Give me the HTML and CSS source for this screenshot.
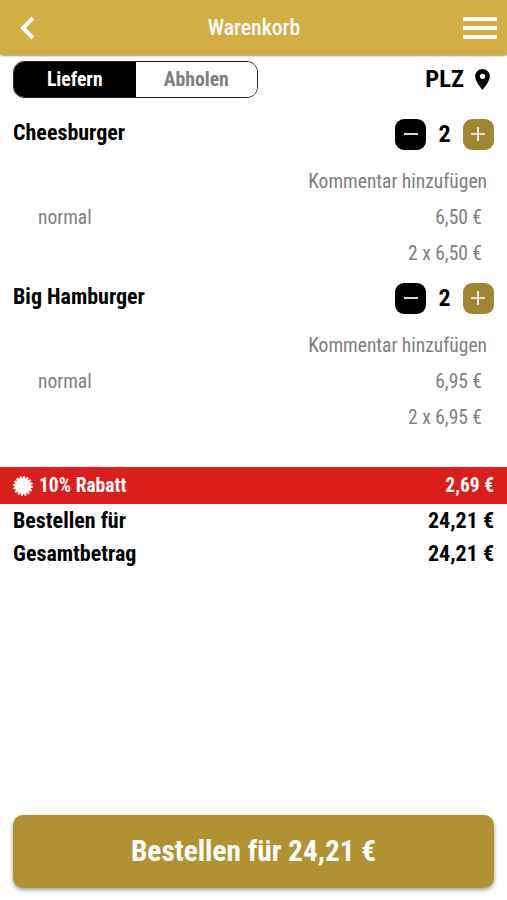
FILE: index.html
```html
<!DOCTYPE html>
<html lang="de">
<head>
  <meta charset="UTF-8" />
  <meta name="viewport" content="width=device-width, initial-scale=1" />
  <title>Warenkorb</title>
  <link rel="stylesheet" href="styles.css">
</head>
<body>

  <header class="topbar">
    <svg class="back" viewBox="0 0 16 24"><path d="M13 2 3 12l10 10" /></svg>
    <h1>Warenkorb</h1>
    <svg class="menu" viewBox="0 0 34 22"><path d="M0 2h34M0 11h34M0 20h34" /></svg>
  </header>

  <div class="options">
    <div class="switch">
      <button class="active">Liefern</button>
      <button>Abholen</button>
    </div>
    <div class="plz">
      <span>PLZ</span>
      <svg class="pin" viewBox="5 2 14 20"><path d="M12 2C8.13 2 5 5.13 5 9c0 5.25 7 13 7 13s7-7.75 7-13c0-3.87-3.13-7-7-7zm0 9.5a2.5 2.5 0 0 1 0-5 2.5 2.5 0 0 1 0 5z" /></svg>
    </div>
  </div>

  <main class="cart">
    <section class="item">
      <div class="item-head">
        <h2>Cheesburger</h2>
        <div class="counter">
          <button class="minus"><svg viewBox="0 0 14 14"><path d="M0 7h14" /></svg></button>
          <span>2</span>
          <button class="plus"><svg viewBox="0 0 14 14"><path d="M0 7h14M7 0v14" /></svg></button>
        </div>
      </div>
      <p class="comment">Kommentar hinzufügen</p>
      <p class="line"><span>normal</span><span>6,50 €</span></p>
      <p class="line sum"><span>2 x 6,50 €</span></p>
    </section>

    <section class="item">
      <div class="item-head">
        <h2>Big Hamburger</h2>
        <div class="counter">
          <button class="minus"><svg viewBox="0 0 14 14"><path d="M0 7h14" /></svg></button>
          <span>2</span>
          <button class="plus"><svg viewBox="0 0 14 14"><path d="M0 7h14M7 0v14" /></svg></button>
        </div>
      </div>
      <p class="comment">Kommentar hinzufügen</p>
      <p class="line"><span>normal</span><span>6,95 €</span></p>
      <p class="line sum"><span>2 x 6,95 €</span></p>
    </section>
  </main>

  <div class="discount">
    <svg class="badge" viewBox="0 0 20 20">
      <circle cx="10" cy="10" r="8.3" />
      <circle class="teeth" cx="10" cy="10" r="8.5" pathLength="32" />
    </svg>
    <span class="name">10% Rabatt</span>
    <span>2,69 €</span>
  </div>

  <div class="totals">
    <p><span>Bestellen für</span><span>24,21 €</span></p>
    <p><span>Gesamtbetrag</span><span>24,21 €</span></p>
  </div>

  <button class="order">Bestellen für 24,21 €</button>

</body>
</html>
```
FILE: styles.css
```css
* {
  box-sizing: border-box;
}

body {
  display: flex;
  flex-direction: column;
  height: 900px;
  margin: 0;
  background: #fff;
  color: #000;
  font-family: "Roboto Condensed", Roboto, sans-serif;
  font-stretch: 75%;
}

h1, h2, p {
  margin: 0;
}

button {
  padding: 0;
  border: none;
  font: inherit;
}

.topbar {
  display: flex;
  align-items: center;
  justify-content: space-between;
  height: 55px;
  padding: 0 10px 0 20px;
  border-radius: 0 0 3px 3px;
  background: #d3ae45;
  color: #fff;
  box-shadow: 0 1px 2px rgba(0, 0, 0, 0.4);
}

.topbar h1 {
  padding-left: 9px;
  font-size: 21.7px;
  font-weight: 500;
}

.topbar svg {
  fill: none;
  stroke: #fff;
}

.back {
  width: 16px;
  height: 24px;
  stroke-width: 4;
}

.menu {
  width: 34px;
  height: 22px;
  stroke-width: 4;
}

.options {
  display: flex;
  align-items: center;
  justify-content: space-between;
  padding: 6px 17px 0 13px;
}

.switch {
  display: flex;
  width: 245px;
  height: 37px;
  border: 1px solid #222;
  border-radius: 11px;
  overflow: hidden;
}

.switch button {
  flex: 1;
  padding-bottom: 1px;
  background: #fff;
  color: #808080;
  font-size: 19.7px;
  font-weight: 700;
}

.switch .active {
  background: #000;
  color: #fff;
}

.plz {
  display: flex;
  align-items: center;
  gap: 11px;
  font-size: 24.5px;
  line-height: 28px;
  font-weight: 700;
}

.plz span {
  padding-bottom: 2px;
}

.pin {
  width: 15px;
  height: 21px;
}

.cart {
  height: 369px;
  padding: 14px 13px 0;
}

.item {
  height: 164px;
}

.item-head {
  display: flex;
  justify-content: space-between;
  height: 52px;
  padding-top: 7px;
}

.item-head h2 {
  font-size: 22px;
  line-height: 28px;
}

.counter {
  display: flex;
  align-items: center;
  justify-content: space-between;
  width: 99px;
  height: 30px;
  font-size: 24px;
  font-weight: 700;
}

.counter button {
  display: flex;
  align-items: center;
  justify-content: center;
  width: 31px;
  height: 31px;
  border-radius: 9px;
  background: #000;
}

.counter .plus {
  background: #a08534;
}

.counter svg {
  width: 14px;
  height: 14px;
  stroke: #fff;
  stroke-width: 1.7;
}

.comment, .line {
  color: #808080;
  font-size: 19.5px;
  line-height: 36px;
}

.comment {
  padding-right: 7px;
  text-align: right;
}

.line {
  display: flex;
  justify-content: space-between;
  padding: 0 12px 0 25px;
}

.sum {
  justify-content: flex-end;
}

.discount {
  display: flex;
  align-items: center;
  height: 37px;
  padding: 0 13px;
  background: #dc1e1a;
  color: #fff;
  font-size: 19.5px;
  line-height: 24px;
  font-weight: 700;
}

.discount span {
  padding-top: 1px;
}

.badge {
  width: 20px;
  height: 20px;
  margin-right: 6px;
  fill: #fff;
}

.teeth {
  fill: none;
  stroke: #fff;
  stroke-width: 2.8;
  stroke-dasharray: 1.2 0.8;
}

.discount .name {
  flex: 1;
}

.totals p {
  display: flex;
  justify-content: space-between;
  padding: 0 13px;
  font-size: 22px;
  font-weight: 700;
  line-height: 33px;
}

.order {
  height: 73px;
  margin: auto 13px 12px;
  padding-bottom: 1px;
  border-radius: 10px;
  background: #b19233;
  color: #fff;
  font-size: 29.3px;
  font-weight: 700;
  box-shadow: 0 2px 4px rgba(0, 0, 0, 0.4);
}
```
